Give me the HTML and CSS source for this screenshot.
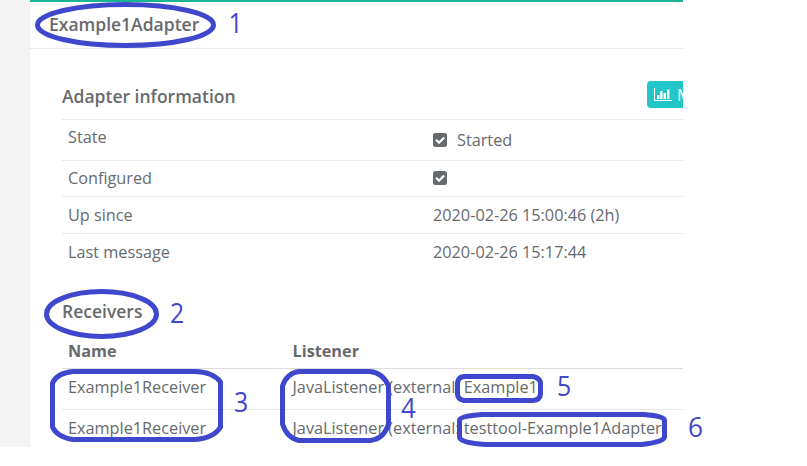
FILE: index.html
```html
<!DOCTYPE html>
<html lang="en">
<head>
<meta charset="utf-8">
<title>Adapter status</title>
<link rel="stylesheet" href="styles.css">
</head>
<body>
<main class="page">
  <section class="panel">
    <header class="panel-title">Example1Adapter</header>
    <div class="panel-body">
      <div class="section-head">
        <h2>Adapter information</h2>
        <button class="metrics" type="button">
          <svg width="18" height="14" viewBox="0 0 18 14" fill="currentColor"><path d="M0 0h1v12h17v1H0zM3 7h2.400v4H3zM6.200 3h2.400v8H6.200zM9.600 5H12v6H9.600zM13 1.500h2.400v9.500H13z"/></svg>
          <span>Metrics</span>
        </button>
      </div>
      <dl class="info">
        <div class="row state"><dt>State</dt><dd><svg class="check" viewBox="0 0 14 14"><rect width="14" height="14" rx="2.500"/><path d="M3 6.700l3 3 5.200-5.200"/></svg><span>Started</span></dd></div>
        <div class="row configured"><dt>Configured</dt><dd><svg class="check" viewBox="0 0 14 14"><rect width="14" height="14" rx="2.500"/><path d="M3 6.700l3 3 5.200-5.200"/></svg></dd></div>
        <div class="row"><dt>Up since</dt><dd>2020-02-26 15:00:46 (2h)</dd></div>
        <div class="row"><dt>Last message</dt><dd>2020-02-26 15:17:44</dd></div>
      </dl>
      <h2 class="receivers-title">Receivers</h2>
      <div class="receivers">
        <div class="line head"><span>Name</span><span>Listener</span></div>
        <div class="line"><span>Example1Receiver</span><span>JavaListener (external: Example1)</span></div>
        <div class="line"><span>Example1Receiver</span><span>JavaListener (external: testtool-Example1Adapter)</span></div>
      </div>
    </div>
  </section>
</main>
<svg class="notes" width="807" height="466" viewBox="0 0 807 466">
  <g class="marks">
    <ellipse cx="125.500" cy="25" rx="88" ry="20.500"/>
    <ellipse cx="101.500" cy="314" rx="55" ry="22.500"/>
    <path d="M73 371.500H195Q213 372 220.500 382V427Q214 438 195 439.500H73Q57 437 52.500 427V383Q57 373 73 371.500Z"/>
    <path d="M299 371.500H370Q383 373 388.500 386V424Q384 439 370 440.500H299Q287 438 282.500 424V386Q287 373 299 371.500Z"/>
    <path d="M464 376.500H533Q540 378 540.500 383V394Q540 400 533 400.500H464Q457.500 399 457.500 394V383Q458 377 464 376.500Z"/>
    <path d="M482 414.500H644Q664 416 664.500 420V437Q664 442 642 444.500H486Q460 443 459.500 437V420Q460 416 482 414.500Z"/>
  </g>
  <g class="digits">
    <text x="228.500" y="33" textLength="14.200" lengthAdjust="spacingAndGlyphs">1</text>
    <text x="170" y="323" textLength="14.200" lengthAdjust="spacingAndGlyphs">2</text>
    <text x="234" y="412" textLength="14.200" lengthAdjust="spacingAndGlyphs">3</text>
    <text x="401" y="418" textLength="14.800" lengthAdjust="spacingAndGlyphs">4</text>
    <text x="557" y="396" textLength="14.200" lengthAdjust="spacingAndGlyphs">5</text>
    <text x="688" y="437" textLength="15" lengthAdjust="spacingAndGlyphs">6</text>
  </g>
</svg>
</body>
</html>
```
FILE: styles.css
```css
* { box-sizing: border-box; }
body {
  margin: 0;
  background: #fff;
  color: #676a6c;
  font: 16.25px/24px "Open Sans", "Noto Sans", sans-serif;
}
.page {
  width: 683px;
  height: 447px;
  padding-left: 30px;
  background: #f3f3f4;
  overflow: hidden;
}
.panel {
  height: 447px;
  background: #fff;
  border-top: 2px solid #1ab394;
}
.panel-title {
  height: 47px;
  padding: 10px 19px 0;
  border-bottom: 1px solid #e7eaec;
  font-size: 17.5px;
  font-weight: 600;
}
.panel-body { padding: 32px 0 0 32px; }
h2 {
  margin: 0;
  font-size: 17.5px;
  font-weight: 600;
  line-height: 24px;
}
.section-head {
  display: flex;
  justify-content: space-between;
  height: 38px;
  overflow: hidden;
}
.section-head h2 { padding-top: 3px; }
.metrics {
  display: flex;
  align-items: center;
  gap: 5px;
  flex: none;
  width: 90px;
  height: 27px;
  margin-right: -54px;
  padding: 0 7px;
  border: 0;
  border-radius: 4px;
  background: #23c6c8;
  color: #fff;
  font: 16.25px/24px "Open Sans", sans-serif;
}
.metrics svg { flex: none; }
.info { margin: 0; }
.row {
  display: grid;
  grid-template-columns: 365px 1fr;
  height: 37px;
  padding: 6px 0 0 6px;
  border-top: 1px solid #e7eaec;
}
.row dd { display: flex; align-items: center; height: 24px; margin: 0; }
.state { height: 41px; padding-top: 5px; }
.state dd { margin-top: 3px; gap: 10px; }
.configured { height: 36px; padding-top: 5px; }
.check { width: 14px; height: 14px; }
.check rect { fill: #676a6c; }
.check path { fill: none; stroke: #fff; stroke-width: 2.2; }
.receivers-title { margin-top: 29px; }
.receivers { margin-top: 16px; }
.line {
  display: grid;
  grid-template-columns: 224.5px 1fr;
  height: 41px;
  padding: 6px 0 0 6px;
  border-top: 1px solid #e7eaec;
  white-space: nowrap;
}
.line.head {
  height: 30px;
  padding-top: 0;
  border-top: 0;
  border-bottom: 1px solid #ddd;
  font-weight: 700;
}
.head + .line { border-top: 0; height: 40px; }
.notes { position: absolute; inset: 0; }
.marks { fill: none; stroke: #3f48cc; stroke-width: 5; }
.digits { fill: #3f48cc; font: 26.5px "Open Sans", sans-serif; }
```
